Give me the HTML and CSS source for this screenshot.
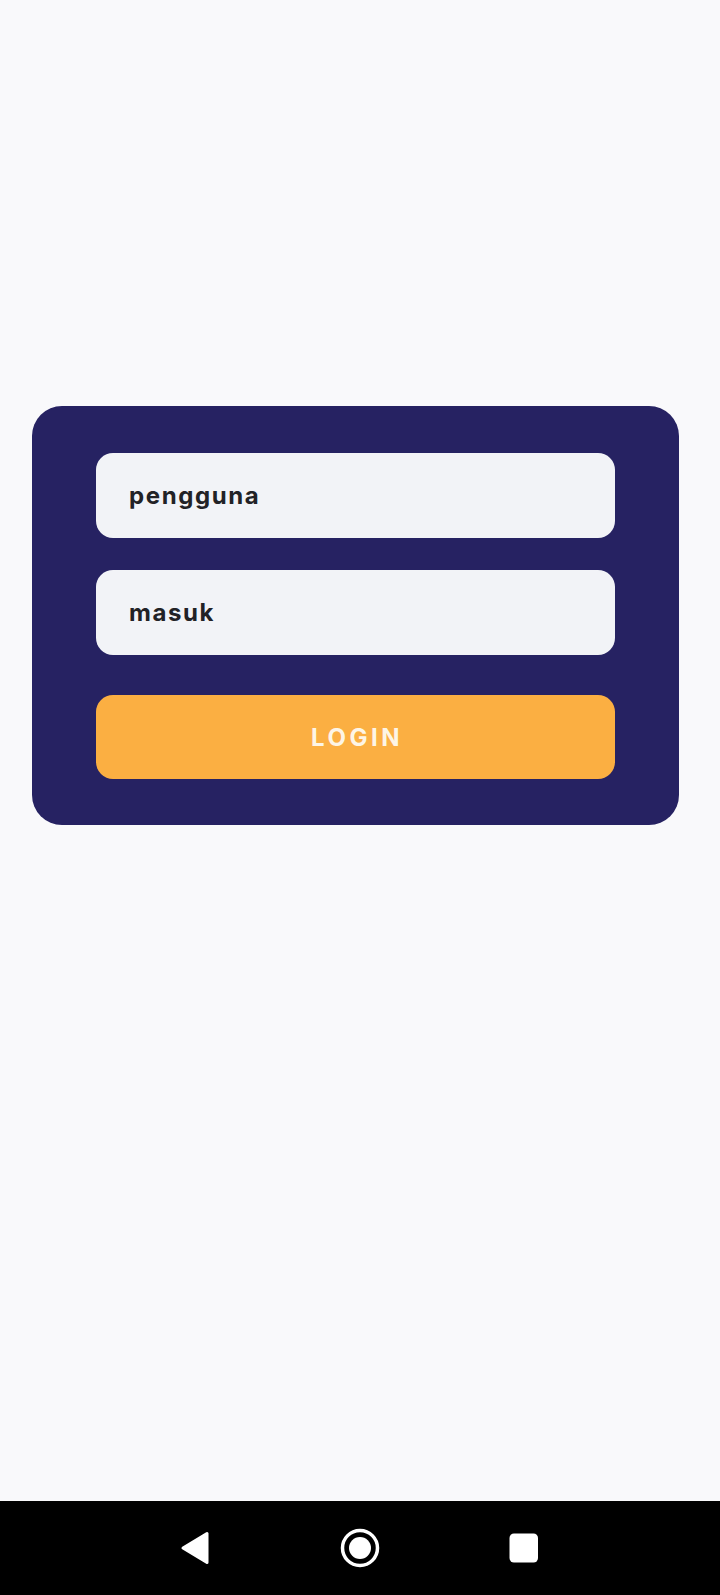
FILE: index.html
```html
<!DOCTYPE html>
<html lang="id">
<head>
<meta charset="utf-8">
<title>Login</title>
<link rel="stylesheet" href="styles.css">
</head>
<body>
<div class="screen">
  <main class="content">
    <form class="card">
      <div class="field">pengguna</div>
      <div class="field">masuk</div>
      <button type="button" class="login">LOGIN</button>
    </form>
  </main>
  <nav class="navbar">
    <span class="nav-item">
      <svg width="40" height="40" viewBox="0 0 40 40"><path d="M8 20 L32 5.5 L32 34.5 Z" fill="#fff" stroke="#fff" stroke-width="3" stroke-linejoin="round"/></svg>
    </span>
    <span class="nav-item">
      <svg width="40" height="40" viewBox="0 0 40 40"><circle cx="20" cy="20" r="17.5" fill="none" stroke="#fff" stroke-width="3.5"/><circle cx="20" cy="20" r="11" fill="#fff"/></svg>
    </span>
    <span class="nav-item">
      <svg width="40" height="40" viewBox="0 0 40 40"><rect x="4.5" y="5.5" width="28.5" height="29" rx="4.5" fill="#fff"/></svg>
    </span>
  </nav>
</div>
</body>
</html>
```
FILE: styles.css
```css
html, body {
  margin: 0;
  padding: 0;
}
body {
  background: #f9f9fb;
  font-family: Inter, "Noto Sans", sans-serif;
}
.screen {
  height: 1595px;
  display: flex;
  flex-direction: column;
}
.content {
  flex: 1;
  padding: 406px 0 0 32px;
}
.card {
  width: 647px;
  box-sizing: border-box;
  margin: 0;
  background: #262262;
  border-radius: 30px;
  padding: 47px 64px 46px 64px;
  display: flex;
  flex-direction: column;
}
.field {
  height: 85px;
  box-sizing: border-box;
  background: #f2f3f7;
  border-radius: 17px;
  padding-left: 33px;
  display: flex;
  align-items: center;
  font-size: 24px;
  font-weight: 700;
  letter-spacing: 1.6px;
  color: #222226;
}
.field + .field {
  margin-top: 32px;
}
.login {
  margin-top: 40px;
  height: 84px;
  border: 0;
  border-radius: 17px;
  background: #fbaf42;
  color: #fdf5e6;
  font-family: Inter, "Noto Sans", sans-serif;
  font-size: 24px;
  font-weight: 700;
  letter-spacing: 3.5px;
  padding: 0 0 0 3px;
}
.navbar {
  height: 94px;
  background: #000;
  display: flex;
  justify-content: center;
  align-items: center;
  gap: 125px;
}
.nav-item {
  width: 40px;
  height: 40px;
  display: block;
}
.nav-item svg {
  display: block;
}
```
